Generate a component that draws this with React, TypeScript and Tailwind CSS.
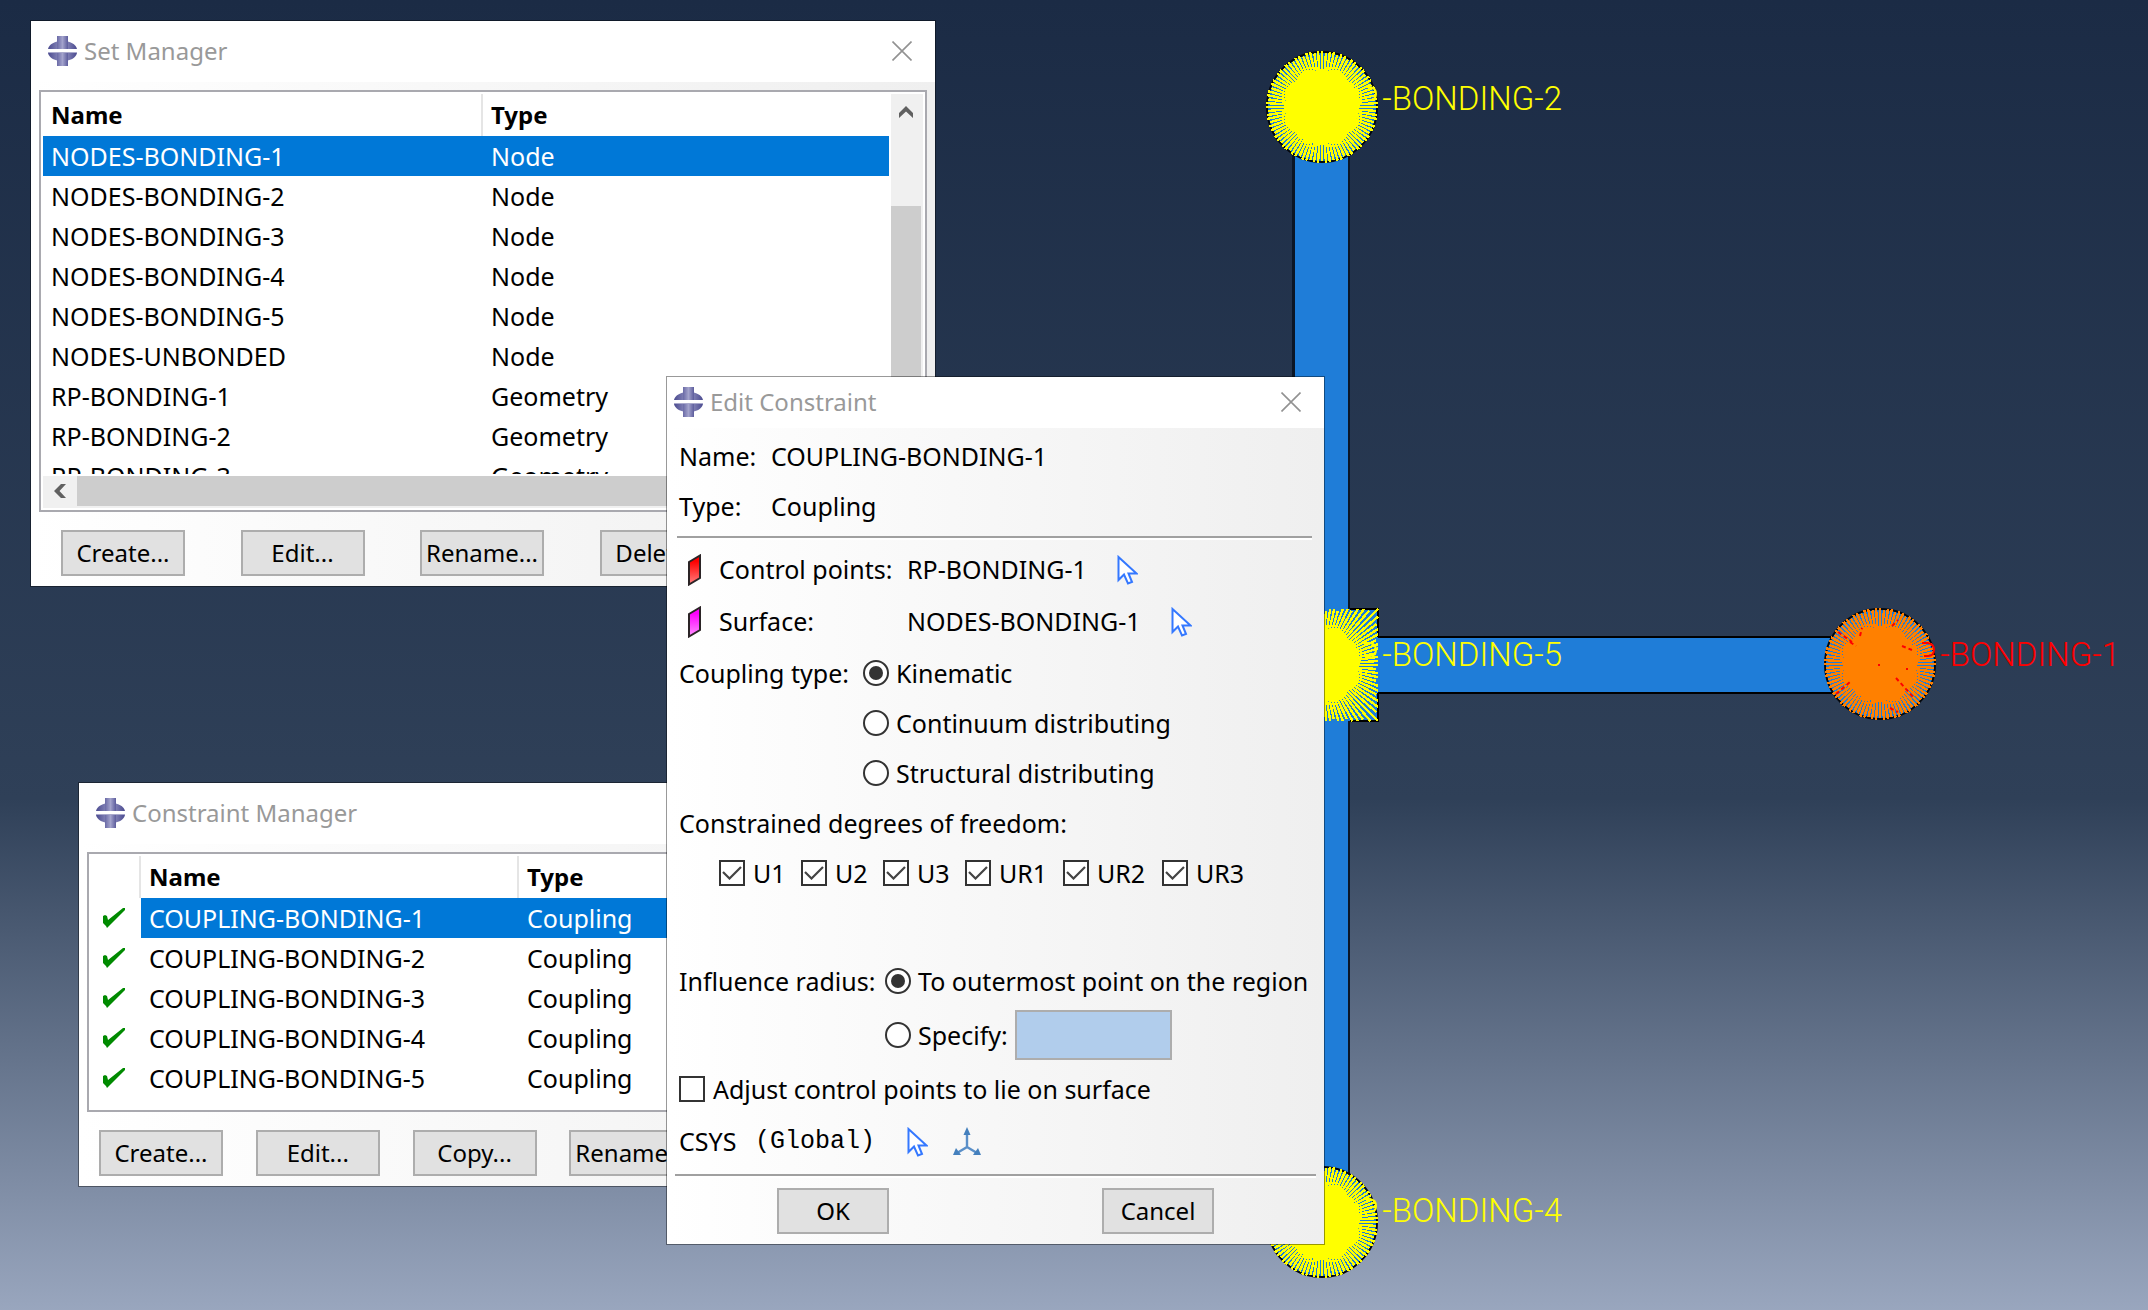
import React, { useId } from 'react';

const UI = 'font-["Noto_Sans","Open_Sans",sans-serif]';

function AppLogo() {
  return (
    <svg width="29" height="30" viewBox="0 0 29 30" aria-hidden="true" className="shrink-0">
      <defs>
        <linearGradient id="logoBody" x1="0" x2="1" y1="0" y2="0">
          <stop offset="0" stopColor="#4a4a8f" />
          <stop offset="0.5" stopColor="#9c9cc8" />
          <stop offset="1" stopColor="#4a4a8f" />
        </linearGradient>
        <linearGradient id="logoStem" x1="0" x2="1" y1="0" y2="0">
          <stop offset="0" stopColor="#6a6aa6" />
          <stop offset="0.5" stopColor="#a3a3cc" />
          <stop offset="1" stopColor="#5c5c9c" />
        </linearGradient>
      </defs>
      <path d="M0 13C1 8 7 5 14.500 5S28 8 29 13Z" fill="url(#logoBody)" />
      <path d="M0 17C1 22 7 25 14.500 25S28 22 29 17Z" fill="url(#logoBody)" />
      <rect x="9" y="0" width="11" height="13" fill="url(#logoStem)" />
      <rect x="9" y="17" width="11" height="13" fill="url(#logoStem)" />
      <rect x="0" y="13" width="29" height="4" fill="#fff" />
      <rect x="0" y="16" width="29" height="1" fill="#a9a9cc" />
    </svg>
  );
}

function CloseButton() {
  return (
    <button type="button" aria-label="Close" className="ml-auto">
      <svg width="20" height="20" viewBox="0 0 20 20" aria-hidden="true">
        <path d="M0.500 0.500L19.500 19.500M19.500 0.500L0.500 19.500" stroke="#929292" strokeWidth="1.600" />
      </svg>
    </button>
  );
}

function TitleBar({ title, compact = false }: { title: string; compact?: boolean }) {
  return (
    <header className={`flex items-center gap-[7px] bg-white pr-[23px] pb-[2px] ${compact ? 'h-[51px] pl-[7px]' : 'h-[61px] pl-[17px]'}`}>
      <AppLogo />
      <h2 className="text-[24px] leading-8 text-[#999]">{title}</h2>
      <CloseButton />
    </header>
  );
}

function PushButton({ children, narrow = false }: { children: string; narrow?: boolean }) {
  return (
    <button
      type="button"
      className={`h-[46px] border-2 border-[#adadad] bg-[#e1e1e1] text-[24px] leading-8 text-black ${narrow ? 'w-[112px]' : 'w-[124px]'}`}
    >
      {children}
    </button>
  );
}

function Check() {
  return (
    <svg width="22" height="20" viewBox="0 0 22 20" aria-label="Active" role="img" className="ml-3">
      <path d="M0 8L2 7L4 8L5 12L20 0H22V2L6 18L4 20L3 18L0 15Z" fill="#008a00" />
    </svg>
  );
}

function Pointer() {
  return (
    <svg width="21" height="30" viewBox="0 0 21 30" aria-hidden="true">
      <path
        d="M1.500 2V25L7 19.500L11 28.500L15 27L11.500 18.500H19.500Z"
        fill="#fff"
        stroke="#3478ff"
        strokeWidth="2"
      />
    </svg>
  );
}

function PickButton({ label }: { label: string }) {
  return (
    <button type="button" aria-label={label} className="block">
      <Pointer />
    </button>
  );
}

function Face({ id, from, to }: { id: string; from: string; to: string }) {
  return (
    <svg width="13" height="32" viewBox="0 0 13 32" aria-hidden="true">
      <defs>
        <linearGradient id={id} x1="0" x2="0" y1="0" y2="1">
          <stop offset="0.200" stopColor={from} />
          <stop offset="1" stopColor={to} />
        </linearGradient>
      </defs>
      <path d="M1 8L12 1.500V24L1 30.500Z" fill={`url(#${id})`} stroke="#2b2426" strokeWidth="2" />
    </svg>
  );
}

function Triad() {
  return (
    <svg width="28" height="30" viewBox="0 0 28 30" aria-hidden="true">
      <g stroke="#5a8fc8" strokeWidth="2.400" fill="none">
        <path d="M14 6V20L4 26M14 20L24 26" />
      </g>
      <g fill="#4480bd">
        <path d="M14 0L17.500 8H10.500Z" />
        <path d="M0 28L3 21L8 28Z" />
        <path d="M28 28L25 21L20 28Z" />
      </g>
    </svg>
  );
}

function Radio({ name, label, checked = false }: { name: string; label: string; checked?: boolean }) {
  return (
    <label className="flex items-center gap-[7px]">
      <span className="grid size-[26px] place-items-center">
        <input
          type="radio"
          name={name}
          defaultChecked={checked}
          className="peer col-start-1 row-start-1 size-[26px] appearance-none rounded-full border-2 border-[#333] bg-white"
        />
        <span className="pointer-events-none col-start-1 row-start-1 hidden size-[14px] rounded-full bg-[#333] peer-checked:block" />
      </span>
      {label}
    </label>
  );
}

function Tick({ label, checked = false }: { label: string; checked?: boolean }) {
  return (
    <label className="flex items-center gap-2">
      <span className="grid size-[26px] place-items-center">
        <input
          type="checkbox"
          defaultChecked={checked}
          className="peer col-start-1 row-start-1 size-[26px] appearance-none border-2 border-[#333] bg-white"
        />
        <svg
          viewBox="0 0 20 14"
          aria-hidden="true"
          className="pointer-events-none col-start-1 row-start-1 hidden h-[14px] w-5 peer-checked:block"
        >
          <path d="M1 6L7.500 12.500L19 1" fill="none" stroke="#444" strokeWidth="2.200" />
        </svg>
      </span>
      {label}
    </label>
  );
}

const SETS: [string, string][] = [
  ['NODES-BONDING-1', 'Node'],
  ['NODES-BONDING-2', 'Node'],
  ['NODES-BONDING-3', 'Node'],
  ['NODES-BONDING-4', 'Node'],
  ['NODES-BONDING-5', 'Node'],
  ['NODES-UNBONDED', 'Node'],
  ['RP-BONDING-1', 'Geometry'],
  ['RP-BONDING-2', 'Geometry'],
  ['RP-BONDING-3', 'Geometry'],
];

function SetManager() {
  return (
    <section className="absolute top-5 left-[30px] w-[906px] border border-black/40 bg-white bg-clip-padding">
      <TitleBar title="Set Manager" />
      <div className="bg-linear-to-r from-white to-[#efefef] px-2 pt-2 pb-[10px]">
        <div className="border-2 border-[#a9a9af] bg-white p-[2px]">
          <div className="flex gap-[2px]">
            <div className="h-[380px] flex-1 overflow-hidden">
              <table className="w-full table-fixed border-separate border-spacing-0 text-left text-[25px]">
                <thead>
                  <tr className="text-[24px]">
                    <th className="w-[440px] border-r-2 border-[#e5e5e5] p-0 pl-2 leading-[42px] font-bold">Name</th>
                    <th className="p-0 pl-2 leading-[42px] font-bold">Type</th>
                  </tr>
                </thead>
                <tbody>
                  {SETS.map(([name, type], i) => (
                    <tr key={name} className={i === 0 ? 'bg-[#0078d7] text-white' : ''}>
                      <td className="p-0 pl-2 leading-10">{name}</td>
                      <td className="p-0 pl-2 leading-10">{type}</td>
                    </tr>
                  ))}
                </tbody>
              </table>
            </div>
            <div className="flex w-8 flex-col bg-[#f0f0f0] pr-[2px]">
              <button type="button" aria-label="Scroll up" className="flex h-8 items-center justify-center pt-1">
                <svg width="14" height="12" viewBox="0 0 14 12" aria-hidden="true">
                  <path d="M0 7L7 0L14 7V12L7 5.500L0 12Z" fill="#606060" />
                </svg>
              </button>
              <div className="mt-20 flex-1 bg-[#cdcdcd]" />
            </div>
          </div>
          <div className="mt-[2px] flex h-8 bg-[#f0f0f0] pb-[2px]">
            <button type="button" aria-label="Scroll left" className="flex w-[34px] items-center justify-center">
              <svg width="12" height="14" viewBox="0 0 12 14" aria-hidden="true">
                <path d="M7 0H12L5.500 7L12 14H7L0 7Z" fill="#606060" />
              </svg>
            </button>
            <div className="mr-20 flex-1 bg-[#cdcdcd]" />
          </div>
        </div>
        <div className="mt-[18px] flex justify-between pr-6 pl-[22px]">
          <PushButton>Create...</PushButton>
          <PushButton>Edit...</PushButton>
          <PushButton>Rename...</PushButton>
          <PushButton>Delete...</PushButton>
          <PushButton>Dismiss</PushButton>
        </div>
      </div>
    </section>
  );
}

const CONSTRAINTS = [1, 2, 3, 4, 5];

function ConstraintManager() {
  return (
    <section className="absolute top-[782px] left-[78px] w-[964px] border border-black/40 bg-white bg-clip-padding">
      <TitleBar title="Constraint Manager" />
      <div className="bg-linear-to-r from-white to-[#efefef] px-2 pt-2 pb-[10px]">
        <div className="border-2 border-[#a9a9af] bg-white p-[2px] pb-3">
          <table className="w-full table-fixed border-separate border-spacing-0 text-left text-[25px]">
            <thead>
              <tr className="text-[24px]">
                <th aria-label="Status" className="w-[50px] border-r-2 border-[#e5e5e5] p-0" />
                <th className="w-[378px] border-r-2 border-[#e5e5e5] p-0 pl-2 leading-[42px] font-bold">Name</th>
                <th className="p-0 pl-2 leading-[42px] font-bold">Type</th>
              </tr>
            </thead>
            <tbody>
              {CONSTRAINTS.map((n) => (
                <tr key={n} className={n === 1 ? 'text-white' : ''}>
                  <td className="p-0">
                    <Check />
                  </td>
                  <td className={`p-0 pl-2 leading-10 ${n === 1 ? 'bg-[#0078d7]' : ''}`}>{`COUPLING-BONDING-${n}`}</td>
                  <td className={`p-0 pl-2 leading-10 ${n === 1 ? 'bg-[#0078d7]' : ''}`}>Coupling</td>
                </tr>
              ))}
            </tbody>
          </table>
        </div>
        <div className="mt-[18px] flex justify-between pr-[26px] pl-3">
          <PushButton>Create...</PushButton>
          <PushButton>Edit...</PushButton>
          <PushButton>Copy...</PushButton>
          <PushButton>Rename...</PushButton>
          <PushButton>Delete...</PushButton>
          <PushButton>Dismiss</PushButton>
        </div>
      </div>
    </section>
  );
}

function Separator() {
  return <div className="h-1 border-t-2 border-[#a0a0a0] bg-white" />;
}

function EditConstraint() {
  const specifyId = useId();
  return (
    <section className="absolute top-[376px] left-[666px] w-[659px] border border-black/40 bg-white bg-clip-padding">
      <TitleBar title="Edit Constraint" compact />
      <div className="bg-linear-to-r from-white to-[#efefef] pt-[3px] pb-[10px] text-[25px] whitespace-nowrap text-black">
        <dl className="grid grid-cols-[92px_1fr] pl-3 leading-[50px]">
          <dt>Name:</dt>
          <dd>COUPLING-BONDING-1</dd>
          <dt>Type:</dt>
          <dd>Coupling</dd>
        </dl>
        <div className="mt-[5px] pr-3 pl-[10px]">
          <Separator />
        </div>

        <div className="mt-1 flex h-[52px] items-center pl-[21px]">
          <Face id="faceRed" from="#ff0000" to="#ff8080" />
          <span className="w-[206px] pl-[18px]">Control points:</span>
          <span className="pr-[30px]">RP-BONDING-1</span>
          <PickButton label="Pick control points" />
        </div>
        <div className="flex h-[52px] items-center pl-[21px]">
          <Face id="faceMagenta" from="#ff00ff" to="#ff90ff" />
          <span className="w-[206px] pl-[18px]">Surface:</span>
          <span className="pr-[30px]">NODES-BONDING-1</span>
          <PickButton label="Pick surface" />
        </div>

        <fieldset className="flex pl-3 leading-[50px]">
          <legend className="sr-only">Coupling type</legend>
          <span className="w-[184px]">Coupling type:</span>
          <div>
            <Radio name="coupling" label="Kinematic" checked />
            <Radio name="coupling" label="Continuum distributing" />
            <Radio name="coupling" label="Structural distributing" />
          </div>
        </fieldset>

        <p className="pl-3 leading-[50px]">Constrained degrees of freedom:</p>
        <div className="grid grid-cols-[82px_82px_82px_98px_99px_1fr] pl-[52px] leading-[50px]">
          <Tick label="U1" checked />
          <Tick label="U2" checked />
          <Tick label="U3" checked />
          <Tick label="UR1" checked />
          <Tick label="UR2" checked />
          <Tick label="UR3" checked />
        </div>

        <fieldset className="mt-[58px] flex pl-3 leading-[50px]">
          <legend className="sr-only">Influence radius</legend>
          <span className="w-[206px]">Influence radius:</span>
          <div>
            <Radio name="radius" label="To outermost point on the region" checked />
            <div className="my-1 flex items-center gap-[7px]">
              <Radio name="radius" label="Specify:" />
              <input
                id={specifyId}
                type="text"
                disabled
                aria-label="Radius value"
                className="h-[50px] w-[157px] border-2 border-[#adadad] bg-[#b1cdec] px-2"
              />
            </div>
          </div>
        </fieldset>

        <div className="pl-3 leading-[50px]">
          <Tick label="Adjust control points to lie on surface" />
        </div>
        <div className="flex h-[52px] items-center pt-1 pl-3">
          <span className="w-[76px]">CSYS</span>
          <span className='w-[152px] font-["Liberation_Mono",monospace]'>(Global)</span>
          <PickButton label="Pick coordinate system" />
          <button type="button" aria-label="Create coordinate system" className="ml-[25px]">
            <Triad />
          </button>
        </div>

        <div className="mt-2 px-2">
          <Separator />
        </div>
        <div className="mt-[10px] flex justify-between px-[110px]">
          <PushButton narrow>OK</PushButton>
          <PushButton narrow>Cancel</PushButton>
        </div>
      </div>
    </section>
  );
}

const SPOKES = Array.from({ length: 88 }, (_, i) => (i * Math.PI * 2) / 88);

function spokePath(cx: number, cy: number, r: number, square: boolean) {
  return SPOKES.map((a, i) => {
    const c = Math.cos(a);
    const s = Math.sin(a);
    const reach = square ? r / Math.max(Math.abs(c), Math.abs(s)) : r;
    const len = reach - (i % 3 === 1 ? 2 : 0);
    return `M${cx} ${cy}L${(cx + c * len).toFixed(1)} ${(cy + s * len).toFixed(1)}`;
  }).join('');
}

type NodeProps = {
  cx: number;
  cy: number;
  label: string;
  lx: number;
  ly: number;
  color?: string;
  ink?: string;
  square?: boolean;
};

function CouplingNode({ cx, cy, label, lx, ly, color = '#ffff00', ink = '#ffff00', square = false }: NodeProps) {
  return (
    <g>
      {square ? (
        <>
          <rect x={cx - 56} y={cy - 56} width="112" height="112" fill="#1f7dd8" />
          <path
            d={`M${cx + 28} ${cy - 56}H${cx + 56}V${cy - 28}M${cx + 56} ${cy + 28}V${cy + 56}H${cx + 28}`}
            fill="none"
            stroke="#000"
            strokeWidth="2"
          />
        </>
      ) : (
        <circle cx={cx} cy={cy} r="55" fill="#1f7dd8" stroke="#05080c" strokeWidth="2" />
      )}
      <path d={spokePath(cx, cy, 56, square)} stroke={color} strokeWidth="2.400" fill="none" shapeRendering="crispEdges" />
      <circle cx={cx} cy={cy} r="37" fill={color} />
      <path
        d={`M${cx + 42} ${ly - 23}h6q6 1 6 7t-6 6h-4`}
        stroke={ink}
        strokeWidth="2"
        fill="none"
      />
      {ink !== color && (
        <path
          d={`M${cx - 30} ${cy - 22}l6 4M${cx - 42} ${cy - 32}l14 10M${cx - 44} ${cy + 30}l14 -12M${cx + 16} ${cy + 14}l18 20M${cx + 22} ${cy - 18}l10 4M${cx + 12} ${cy - 38}l6 -6M${cx - 2} ${cy + 1}h2M${cx + 26} ${cy + 5}h2M${cx + 10} ${cy + 44}l8 4M${cx - 20} ${cy - 28}l2 -8`}
          stroke={ink}
          strokeWidth="2"
          strokeDasharray="4 3"
          fill="none"
        />
      )}
      <text x={lx} y={ly} textAnchor="end" fill={ink} className='font-["Roboto",sans-serif] text-[33px] font-light'>
        {label}
      </text>
    </g>
  );
}

function Viewport() {
  return (
    <svg viewBox="0 0 2148 1310" preserveAspectRatio="xMinYMin meet" className="absolute top-0 left-0 w-full" aria-label="Model view">
      <rect x="1292" y="100" width="58" height="1110" fill="#0b1626" />
      <rect x="1295" y="100" width="53" height="1110" fill="#1f7dd8" />
      <rect x="1348" y="636" width="500" height="58" fill="#000" />
      <rect x="1340" y="638" width="508" height="54" fill="#1f7dd8" />
      <CouplingNode cx={1322} cy={107} label="-BONDING-2" lx={1562} ly={110} />
      <CouplingNode cx={1322} cy={665} label="-BONDING-5" lx={1562} ly={666} square />
      <CouplingNode cx={1322} cy={1222} label="-BONDING-4" lx={1562} ly={1222} />
      <CouplingNode cx={1880} cy={664} label="-BONDING-1" lx={2120} ly={666} color="#ff8000" ink="#ff0000" />
    </svg>
  );
}

export default function App() {
  return (
    <main
      className={`relative min-h-screen overflow-hidden bg-[linear-gradient(to_bottom,#1b2b45_0%,#2f4058_61%,#99a6be_100%)] ${UI}`}
    >
      <Viewport />
      <SetManager />
      <ConstraintManager />
      <EditConstraint />
    </main>
  );
}
